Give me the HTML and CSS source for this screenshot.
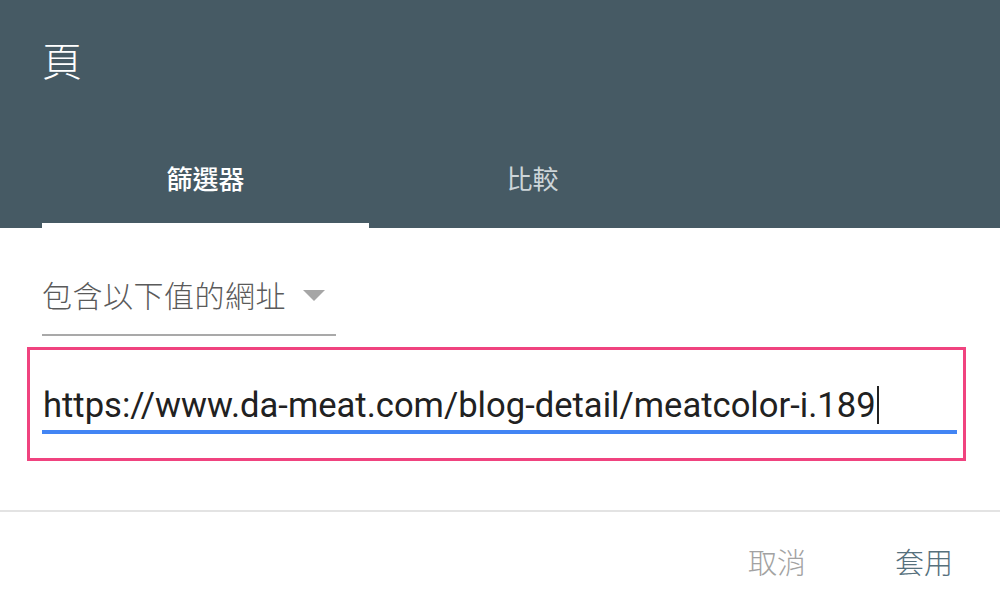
FILE: index.html
```html
<!DOCTYPE html>
<html lang="zh-Hant">
<head>
<meta charset="utf-8">
<title>頁</title>
<link rel="stylesheet" href="styles.css">
</head>
<body>
<div class="dialog">
  <header class="header">
    <div class="title">頁</div>
    <nav class="tabs">
      <div class="tab active">篩選器</div>
      <div class="tab">比較</div>
    </nav>
  </header>
  <main class="content">
    <div class="select">
      <span class="select-label">包含以下值的網址</span>
      <svg class="caret" width="22" height="11" viewBox="0 0 22 11"><path d="M0 0 L22 0 L11 11 Z" fill="#a6a6a6"/></svg>
    </div>
    <div class="highlight">
      <div class="field"><span class="field-text">https://www.da-meat.com/blog-detail/meatcolor-i.189</span><span class="cursor"></span></div>
    </div>
  </main>
  <footer class="actions">
    <span class="btn cancel">取消</span>
    <span class="btn apply">套用</span>
  </footer>
</div>
</body>
</html>
```

FILE: styles.css
```css
html, body {
  margin: 0;
  padding: 0;
  background: #ffffff;
}
body {
  font-family: "Noto Sans CJK TC", "Noto Sans", Roboto, sans-serif;
  width: 1000px;
  height: 613px;
  overflow: hidden;
}
.header {
  background: #465a64;
  height: 228px;
  box-sizing: border-box;
  padding-top: 35px;
  display: flex;
  flex-direction: column;
}
.title {
  color: #ffffff;
  font-size: 40px;
  font-weight: 300;
  line-height: 48px;
  height: 48px;
  padding-left: 42px;
}
.tabs {
  display: flex;
  margin-top: 59px;
  padding-left: 42px;
}
.tab {
  width: 327px;
  box-sizing: border-box;
  text-align: center;
  font-size: 26px;
  line-height: 30px;
  padding-top: 21px;
  padding-bottom: 30px;
  border-bottom: 5px solid transparent;
  color: #cdd5d9;
}
.tab.active {
  color: #ffffff;
  font-weight: 500;
  border-bottom-color: #ffffff;
}
.content {
  padding-top: 49px;
}
.select {
  margin-left: 42px;
  width: 294px;
  box-sizing: border-box;
  display: flex;
  align-items: center;
  border-bottom: 2px solid #a9a9a9;
  padding-bottom: 23px;
  height: 59px;
}
.select-label {
  font-size: 30px;
  line-height: 34px;
  color: #5a5a5a;
  font-weight: 300;
  letter-spacing: 0.5px;
}
.caret {
  margin-left: 17px;
  margin-top: 2px;
}
.highlight {
  margin-top: 11px;
  margin-left: 27px;
  width: 939px;
  height: 114px;
  box-sizing: border-box;
  border: 3px solid #f0437f;
  padding: 35px 6px 0 12px;
}
.field {
  border-bottom: 4px solid #4285f4;
  padding-bottom: 5px;
  height: 49px;
  box-sizing: border-box;
  display: flex;
  align-items: center;
}
.field-text {
  font-family: Roboto, "Noto Sans", sans-serif;
  font-size: 34.6px;
  line-height: 40px;
  color: #212121;
  padding-left: 1px;
}
.cursor {
  display: inline-block;
  width: 2px;
  height: 38px;
  background: #222222;
  margin-left: 1px;
}
.actions {
  margin-top: 49px;
  border-top: 2px solid #e3e3e3;
  display: flex;
  justify-content: flex-end;
  padding: 29px 47px 0 0;
  gap: 89px;
}
.btn {
  font-size: 29px;
  line-height: 40px;
  font-weight: 300;
}
.cancel {
  color: #a2a2a2;
}
.apply {
  color: #56707c;
}
```
